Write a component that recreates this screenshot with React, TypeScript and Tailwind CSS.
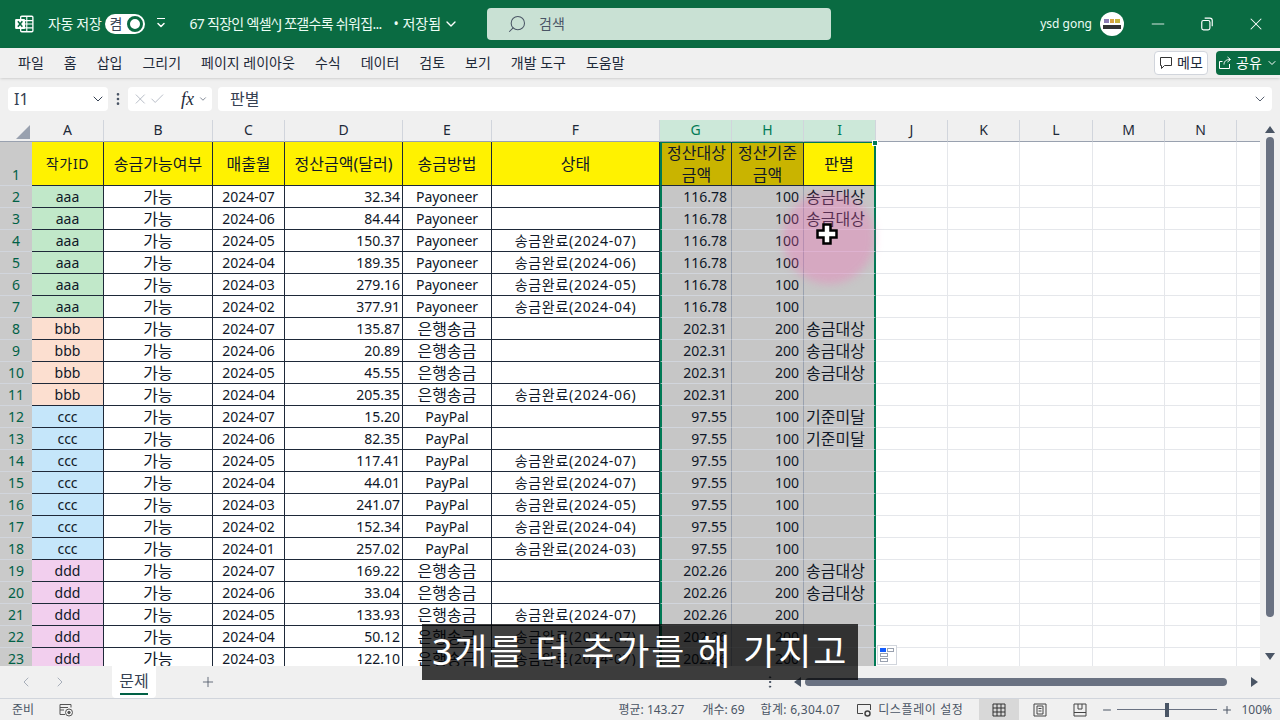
import { Check, ChevronDown, ChevronLeft, ChevronRight, Minus, MoreVertical, Plus, Search, X } from 'lucide-react'

const columns = ['A', 'B', 'C', 'D', 'E', 'F', 'G', 'H', 'I', 'J', 'K', 'L', 'M', 'N', '']
const headers = ['작가ID', '송금가능여부', '매출월', '정산금액(달러)', '송금방법', '상태']

type Row = [string, string, string, string, string, string, string, string]

const rows: Row[] = [
  ['aaa', '2024-07', '32.34', 'Payoneer', '', '116.78', '100', '송금대상'],
  ['aaa', '2024-06', '84.44', 'Payoneer', '', '116.78', '100', '송금대상'],
  ['aaa', '2024-05', '150.37', 'Payoneer', '송금완료(2024-07)', '116.78', '100', ''],
  ['aaa', '2024-04', '189.35', 'Payoneer', '송금완료(2024-06)', '116.78', '100', ''],
  ['aaa', '2024-03', '279.16', 'Payoneer', '송금완료(2024-05)', '116.78', '100', ''],
  ['aaa', '2024-02', '377.91', 'Payoneer', '송금완료(2024-04)', '116.78', '100', ''],
  ['bbb', '2024-07', '135.87', '은행송금', '', '202.31', '200', '송금대상'],
  ['bbb', '2024-06', '20.89', '은행송금', '', '202.31', '200', '송금대상'],
  ['bbb', '2024-05', '45.55', '은행송금', '', '202.31', '200', '송금대상'],
  ['bbb', '2024-04', '205.35', '은행송금', '송금완료(2024-06)', '202.31', '200', ''],
  ['ccc', '2024-07', '15.20', 'PayPal', '', '97.55', '100', '기준미달'],
  ['ccc', '2024-06', '82.35', 'PayPal', '', '97.55', '100', '기준미달'],
  ['ccc', '2024-05', '117.41', 'PayPal', '송금완료(2024-07)', '97.55', '100', ''],
  ['ccc', '2024-04', '44.01', 'PayPal', '송금완료(2024-07)', '97.55', '100', ''],
  ['ccc', '2024-03', '241.07', 'PayPal', '송금완료(2024-05)', '97.55', '100', ''],
  ['ccc', '2024-02', '152.34', 'PayPal', '송금완료(2024-04)', '97.55', '100', ''],
  ['ccc', '2024-01', '257.02', 'PayPal', '송금완료(2024-03)', '97.55', '100', ''],
  ['ddd', '2024-07', '169.22', '은행송금', '', '202.26', '200', '송금대상'],
  ['ddd', '2024-06', '33.04', '은행송금', '', '202.26', '200', '송금대상'],
  ['ddd', '2024-05', '133.93', '은행송금', '송금완료(2024-07)', '202.26', '200', ''],
  ['ddd', '2024-04', '50.12', '은행송금', '송금완료(2024-07)', '202.26', '200', ''],
  ['ddd', '2024-03', '122.10', '은행송금', '송금완료(2024-07)', '202.26', '200', ''],
]

const authorColor: Record<string, string> = {
  aaa: 'bg-[#c1e8c9]',
  bbb: 'bg-[#fcdfd0]',
  ccc: 'bg-[#c5e6fa]',
  ddd: 'bg-[#f2cfee]',
}

const tabs = ['파일', '홈', '삽입', '그리기', '페이지 레이아웃', '수식', '데이터', '검토', '보기', '개발 도구', '도움말']

function ExcelLogo() {
  return (
    <svg viewBox="0 0 18 18" className="h-5 w-5">
      <rect x="6" y="2" width="11" height="14" rx="1" fill="none" stroke="white" strokeWidth="1.2" />
      <path d="M6 6h11M6 9h11M6 12.500h11M11.500 2v14" stroke="white" strokeWidth="1" />
      <rect x="1" y="4.500" width="9" height="9" rx="1" fill="white" />
      <path d="M3.500 6.500l4 5M7.500 6.500l-4 5" stroke="#0a6b42" strokeWidth="1.400" />
    </svg>
  )
}

function Avatar() {
  return (
    <svg viewBox="0 0 24 24" className="h-6 w-6">
      <circle cx="12" cy="12" r="12" fill="white" />
      <rect x="4" y="7" width="5" height="4" fill="#8d7cb5" />
      <rect x="10" y="7" width="4" height="4" fill="#d9a441" />
      <rect x="15" y="7" width="5" height="4" fill="#c9b53d" />
      <rect x="3" y="13" width="18" height="4" fill="#333" />
    </svg>
  )
}

function TitleBar() {
  return (
    <header className="flex h-12 shrink-0 items-center bg-[#0a6b42] text-white">
      <div className="flex w-12 justify-center"><ExcelLogo /></div>
      <span className="text-sm tracking-tight text-emerald-50">자동 저장</span>
      <div className="ml-1 flex h-5 w-10 items-center justify-between rounded-full bg-white pl-1 pr-0.5">
        <span className="text-sm text-gray-700">켬</span>
        <span className="h-4 w-4 rounded-full border-[3px] border-[#0a6b42] bg-white" />
      </div>
      <div className="ml-2 flex w-4 flex-col items-center">
        <span className="h-px w-2 bg-white" />
        <ChevronDown className="h-3 w-3" strokeWidth={3} />
      </div>
      <span className="ml-5 text-sm tracking-tighter text-emerald-50">67 직장인 엑셀^J 쪼갤수록 쉬워집...</span>
      <span className="ml-3 text-sm text-emerald-50">• 저장됨</span>
      <ChevronDown className="ml-0.5 h-4 w-4" />
      <div className="ml-7 flex h-8 w-86 items-center gap-3 rounded-sm bg-[#c9e1d4] pl-5 text-gray-600">
        <Search className="h-5 w-5 -scale-x-100" strokeWidth={1.25} />
        <span className="text-sm">검색</span>
      </div>
      <span className="ml-auto text-xs text-emerald-50">ysd gong</span>
      <div className="ml-2"><Avatar /></div>
      <div className="ml-6 flex items-center gap-8 pr-3.5">
        <Minus className="h-5 w-5" strokeWidth={1} />
        <svg viewBox="0 0 12 12" className="h-3.5 w-3.5" fill="none" stroke="white" strokeWidth="1">
          <rect x="1.500" y="3" width="7" height="8" rx="1.500" />
          <path d="M4 1h4.500a2 2 0 0 1 2 2v5" />
        </svg>
        <X className="h-5 w-5" strokeWidth={1.25} />
      </div>
    </header>
  )
}

function RibbonTabs() {
  return (
    <nav className="z-10 flex h-7.5 shrink-0 items-center bg-[#f0f0f0] pl-4.5 shadow-sm">
      <div className="flex gap-5 text-sm text-gray-800">
        {tabs.map((tab) => (
          <span key={tab}>{tab}</span>
        ))}
      </div>
      <div className="ml-auto flex items-center gap-2">
        <div className="flex h-6 w-13.5 items-center justify-center gap-1 rounded-sm border border-gray-300 bg-white text-sm text-gray-800">
          <svg viewBox="0 0 14 14" className="h-3.5 w-3.5" fill="none" stroke="#333" strokeWidth="1">
            <path d="M1.500 1.500h11v8h-7l-3 3v-3h-1z" />
          </svg>
          메모
        </div>
        <div className="flex h-6 w-16 items-center justify-center gap-1 rounded-l-sm bg-[#0a6b42] text-sm text-white">
          <svg viewBox="0 0 14 14" className="h-3.5 w-3.5" fill="none" stroke="white" strokeWidth="1">
            <path d="M11.500 8v4.500h-10v-7h3M6 8.500c0-3 2-5 6-5M9.500 1l3 2.500-3 2.500" />
          </svg>
          공유
          <ChevronDown className="h-3 w-3" />
        </div>
      </div>
    </nav>
  )
}

function FormulaBar() {
  return (
    <div className="flex h-10.5 shrink-0 items-center gap-0.5 bg-[#f0f0f0] px-2 text-gray-600">
      <div className="flex h-6 w-25 items-center justify-between rounded-sm bg-white pl-1.5 pr-0.5 text-base text-gray-700">
        I1
        <ChevronDown className="h-4 w-4" strokeWidth={1.5} />
      </div>
      <MoreVertical className="h-4 w-4" strokeWidth={2} />
      <div className="flex h-6 w-21 items-center rounded-sm bg-white px-1 text-gray-400">
        <X className="h-5 w-5" strokeWidth={1} />
        <Check className="h-5 w-5" strokeWidth={1} />
        <span className="ml-4 font-['Liberation_Serif',serif] text-lg italic text-gray-800">fx</span>
        <ChevronDown className="ml-1 h-3 w-3 text-gray-500" />
      </div>
      <div className="ml-1 flex h-6 flex-1 items-center justify-between rounded-sm bg-white pl-3 pr-1 text-base text-gray-700">
        판별
        <ChevronDown className="h-4 w-4" strokeWidth={1.25} />
      </div>
    </div>
  )
}

function Cell({ className, children }: { className: string; children?: React.ReactNode }) {
  return <div className={`flex h-5.5 items-center overflow-visible whitespace-nowrap border-b border-r ${className}`}>{children}</div>
}

function Sheet() {
  return (
    <div className="relative flex-1 overflow-hidden bg-white text-sm text-gray-900">
      <div className="grid grid-cols-[32px_72px_109px_72px_118px_89px_168px_72px_72px_72px_72px_72px_73px_72px_72px_1fr]">
        <div className="flex h-5.5 items-end justify-end border-b border-gray-400 bg-[#f0f0f0] pb-0.5 pr-0.5">
          <div className="h-0 w-0 border-b-[14px] border-l-[14px] border-b-gray-400 border-l-transparent" />
        </div>
        {columns.map((col, i) => {
          const selected = col === 'G' || col === 'H' || col === 'I'
          return (
            <div
              key={i}
              className={`flex h-5.5 items-center justify-center border-b border-r border-b-gray-400 pb-0.5 text-sm ${selected ? 'border-r-gray-300 bg-[#cce8d9] text-emerald-700' : 'border-r-gray-300 bg-[#f0f0f0] text-gray-800'}`}
            >
              {col}
            </div>
          )
        })}

        {/* header row */}
        <div className="flex h-11 items-end justify-center border-b border-gray-300 bg-[#cacaca] text-emerald-800">1</div>
        {headers.map((h, i) => (
          <div key={h} className={`flex h-11 items-center justify-center border-b border-r border-gray-800 bg-[#fff200] ${i === 0 ? 'tracking-wider' : 'text-base'}`}>{h}</div>
        ))}
        <div className="flex h-11 items-center justify-center border-b border-l-2 border-r border-t border-b-gray-800 border-l-emerald-700 border-r-gray-800 border-t-emerald-700 bg-[#c9b400] text-center text-base leading-5.5">정산대상<br />금액</div>
        <div className="flex h-11 items-center justify-center border-b border-r border-t border-b-gray-800 border-r-gray-800 border-t-emerald-700 bg-[#c9b400] text-center text-base leading-5.5">정산기준<br />금액</div>
        <div className="flex h-11 items-center justify-center border-r-2 border-t border-r-emerald-700 border-t-emerald-700 border-b border-b-gray-800 bg-[#fff200] text-base">판별</div>
        {[0, 1, 2, 3, 4, 5].map((i) => (
          <div key={i} className="h-11 border-b border-r border-gray-200" />
        ))}

        {/* data rows */}
        {rows.map((r, i) => (
          <Row key={i} num={i + 2} row={r} />
        ))}
      </div>

      {/* fill handle */}
      <div className="absolute left-218 top-5 h-1.5 w-1.5 border border-white bg-emerald-700" />

      {/* click highlight and cursor */}
      <div className="absolute left-[783px] top-[72px] h-23 w-23 rounded-full bg-pink-400/30 blur-xs" />
      <svg viewBox="0 0 24 24" className="absolute left-[815px] top-[102px] h-6 w-6">
        <path d="M8.500 2.500h7v6h6v7h-6v6h-7v-6h-6v-7h6z" fill="white" stroke="black" strokeWidth="2.500" />
      </svg>

      {/* quick analysis */}
      <div className="absolute left-[877px] top-[525px] flex h-5 w-5 flex-col gap-px border border-gray-300 bg-white p-0.5">
        <div className="flex gap-px">
          <span className="h-1 w-2 bg-blue-600" />
          <span className="h-1 w-2 border border-gray-400" />
        </div>
        <span className="h-1 w-2 border border-gray-400" />
        <span className="h-1 w-2 border border-gray-400" />
      </div>

      {/* vertical scrollbar */}
      <div className="absolute bottom-0 right-0 top-0 flex w-5 flex-col items-center bg-[#f0f0f0] py-1.5">
        <div className="h-0 w-0 border-x-[5px] border-b-[7px] border-x-transparent border-b-gray-600" />
        <div className="mt-1 h-full w-2 flex-1 rounded-full bg-gray-500" />
        <div className="mt-9 h-0 w-0 border-x-[5px] border-t-[7px] border-x-transparent border-t-gray-600" />
      </div>
    </div>
  )
}

function Row({ num, row }: { num: number; row: Row }) {
  const [author, month, amount, method, status, target, base, verdict] = row
  const line = 'border-gray-800'
  const methodSize = method === '은행송금' ? 'text-base' : ''
  return (
    <>
      <div className="flex h-5.5 items-center justify-center border-b border-gray-300 bg-[#cacaca] text-emerald-800">{num}</div>
      <Cell className={`justify-center ${line} ${authorColor[author]}`}>{author}</Cell>
      <Cell className={`justify-center text-base ${line}`}>가능</Cell>
      <Cell className={`justify-center ${line}`}>{month}</Cell>
      <Cell className={`justify-end pr-0.5 ${line}`}>{amount}</Cell>
      <Cell className={`justify-center ${methodSize} ${line}`}>{method}</Cell>
      <Cell className={`justify-center tracking-wider ${line}`}>{status}</Cell>
      <Cell className="justify-end border-l-2 border-b-gray-300 border-l-emerald-700 border-r-gray-400 bg-[#c6c6c6] pr-1">{target}</Cell>
      <Cell className="justify-end border-b-gray-300 border-r-gray-400 bg-[#c6c6c6] pr-1">{base}</Cell>
      <Cell className="border-r-2 border-b-gray-300 border-r-emerald-700 bg-[#c6c6c6] pl-0.5 text-base">{verdict}</Cell>
      {[0, 1, 2, 3, 4, 5].map((i) => (
        <Cell key={i} className="border-gray-200" />
      ))}
    </>
  )
}

function SheetTabs() {
  return (
    <div className="flex h-8 shrink-0 items-center bg-[#f0f0f0] text-gray-400">
      <ChevronLeft className="ml-4.5 h-4 w-4" strokeWidth={1.25} />
      <ChevronRight className="ml-4.5 h-4 w-4" strokeWidth={1.25} />
      <div className="ml-11 flex h-8 w-11 flex-col items-center justify-center rounded-b bg-white text-base text-gray-700">
        문제
        <span className="h-0.5 w-7 bg-emerald-800" />
      </div>
      <Plus className="ml-11 h-4 w-4 text-gray-600" strokeWidth={1.25} />
      <MoreVertical className="ml-[546px] h-4 w-4 text-gray-700" strokeWidth={1.5} />
      <div className="ml-4 h-0 w-0 border-y-[5px] border-r-[7px] border-y-transparent border-r-gray-600" />
      <div className="ml-1 h-2 flex-1 rounded-full bg-gray-500" />
      <div className="ml-6 mr-5.5 h-0 w-0 border-y-[5px] border-l-[7px] border-y-transparent border-l-gray-600" />
    </div>
  )
}

function StatusBar() {
  return (
    <footer className="flex h-5.5 shrink-0 items-center border-t border-gray-300 bg-[#f0f0f0] text-xs text-gray-600">
      <span className="ml-3">준비</span>
      <svg viewBox="0 0 16 16" className="ml-6 h-4 w-4" fill="none" stroke="#555" strokeWidth="1">
        <path d="M2 2.500h11v3M2 2.500v10h5M2 5.500h8M2 8h4" />
        <circle cx="11" cy="10.500" r="3.500" />
        <circle cx="11" cy="10.500" r="1.200" fill="#555" />
      </svg>
      <span className="ml-auto">평균: 143.27</span>
      <span className="ml-4.5">개수: 69</span>
      <span className="ml-4 tracking-wide">합계: 6,304.07</span>
      <svg viewBox="0 0 16 16" className="ml-4 h-4 w-4" fill="none" stroke="#444" strokeWidth="1">
        <path d="M7 11.500H1.500v-9h13V8" />
        <circle cx="11.500" cy="11.500" r="2.500" strokeWidth="1.500" />
      </svg>
      <span className="ml-1.5 tracking-wider">디스플레이 설정</span>
      <div className="ml-4 flex h-full w-10 items-center justify-center bg-[#d8d8d8]">
        <svg viewBox="0 0 14 14" className="h-3.5 w-3.5" fill="none" stroke="#333" strokeWidth="1">
          <path d="M1 1h12v12H1zM1 5h12M1 9h12M5 1v12M9 1v12" />
        </svg>
      </div>
      <svg viewBox="0 0 14 14" className="ml-3.5 h-3.5 w-3.5" fill="none" stroke="#444" strokeWidth="1">
        <path d="M1 1h12v12H1zM4 3h6v8H4zM5.500 5.500h3M5.500 8h3" />
      </svg>
      <svg viewBox="0 0 14 14" className="ml-6.5 h-3.5 w-3.5" fill="none" stroke="#444" strokeWidth="1">
        <path d="M1 1h12v12H1zM1 9.500h12M5 1v5h4V1" />
      </svg>
      <Minus className="ml-3.5 h-3 w-3" />
      <div className="relative mx-1 h-px w-25 bg-gray-500">
        <span className="absolute -top-1.5 left-12 h-3.5 w-1 bg-gray-600" />
      </div>
      <Plus className="h-3 w-3" />
      <span className="ml-2 pr-2">100%</span>
    </footer>
  )
}

export default function App() {
  return (
    <div className="relative flex h-screen w-full flex-col overflow-hidden font-['Noto_Sans','Noto_Sans_CJK_KR',sans-serif]">
      <TitleBar />
      <RibbonTabs />
      <FormulaBar />
      <Sheet />
      <SheetTabs />
      <StatusBar />
      {/* video subtitle */}
      <div className="absolute bottom-10 left-[422px] flex h-14 w-109 items-center justify-center bg-black/75 text-4xl tracking-wider text-white">
        3개를 더 추가를 해 가지고
      </div>
    </div>
  )
}
